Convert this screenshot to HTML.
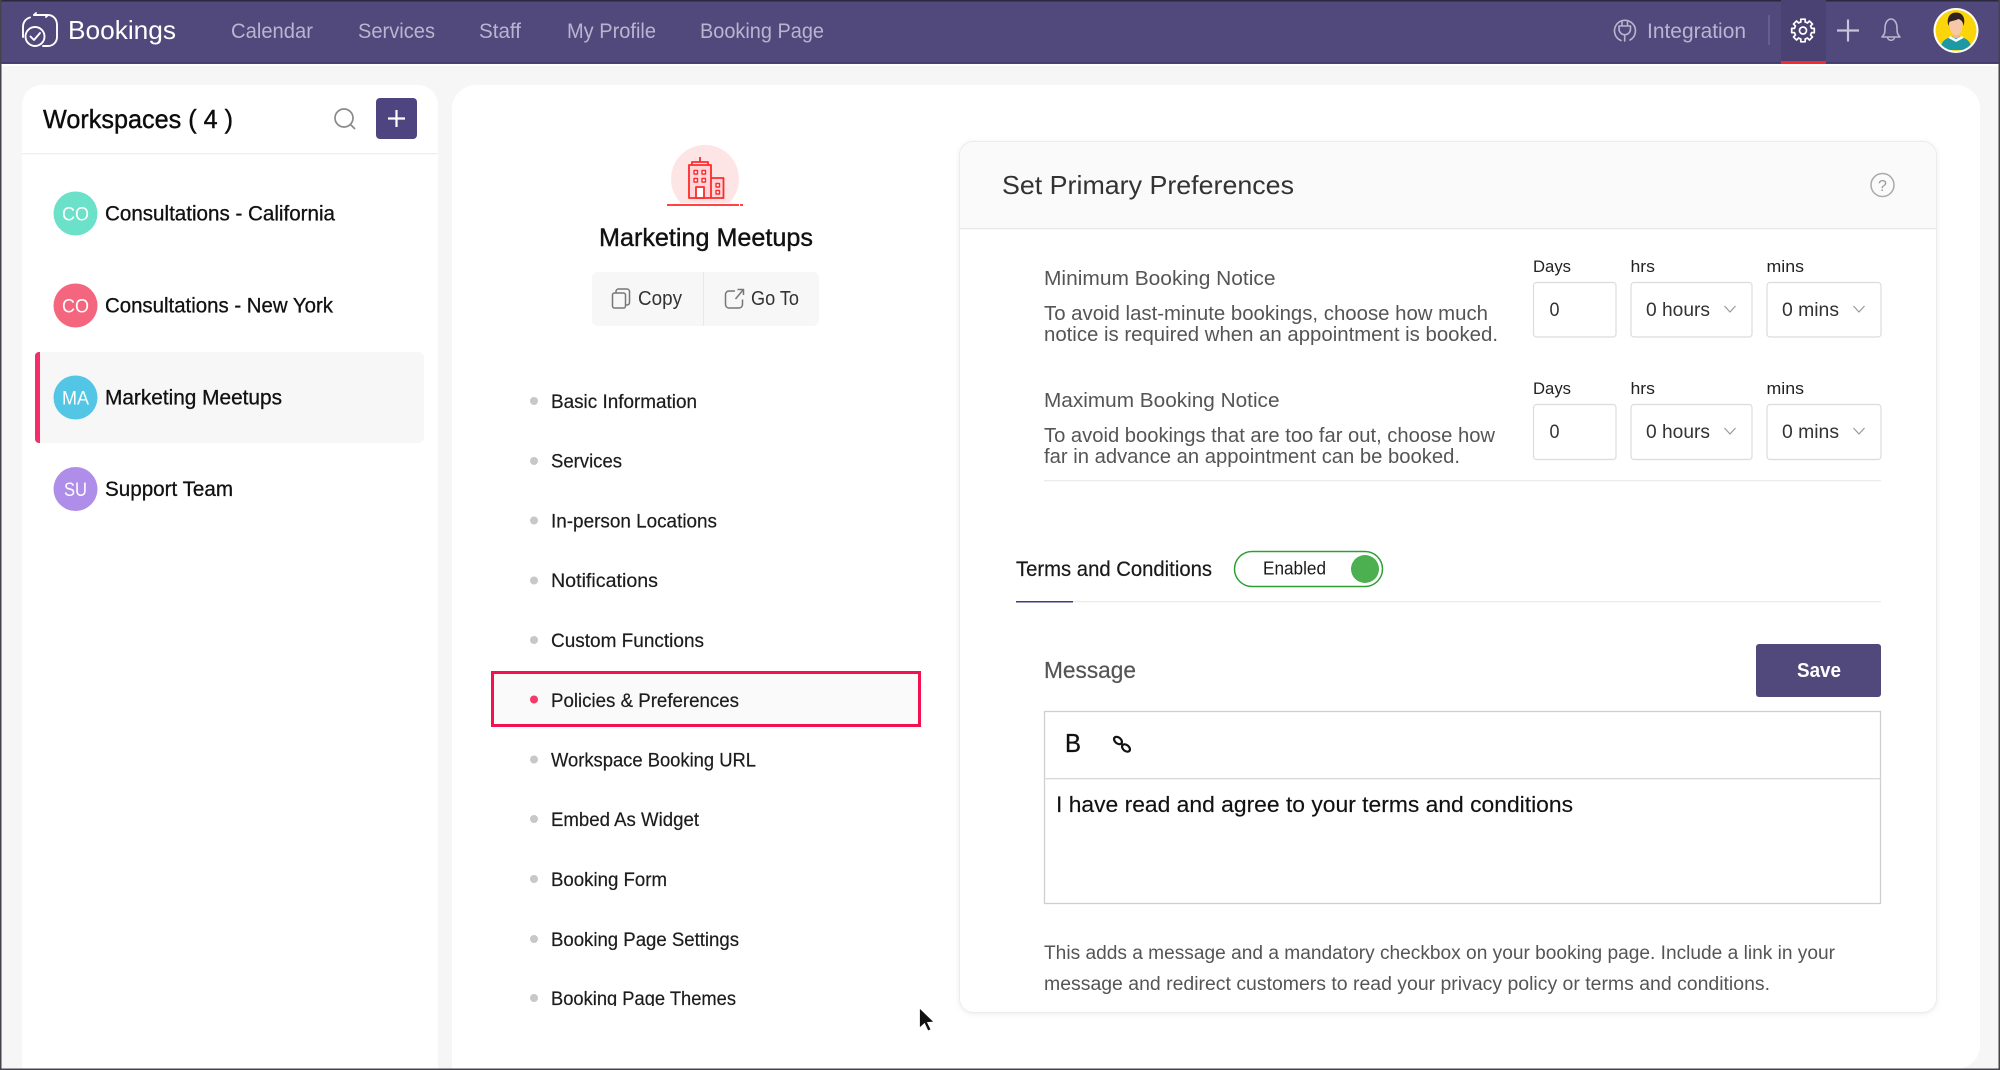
<!DOCTYPE html>
<html><head><meta charset="utf-8"><title>Bookings</title>
<style>
html,body{margin:0;padding:0;background:#f6f6f6;width:2000px;height:1070px;overflow:hidden}
svg{display:block}
text{font-family:"Liberation Sans",sans-serif}
.n{font-size:21px;fill:#b9b5d0}
.w{font-size:21px;fill:#111;stroke:#111;stroke-width:.3px}
.a{font-size:19px;fill:#fff;text-anchor:middle}
.m{font-size:19px;fill:#1c1c1c;stroke:#1c1c1c;stroke-width:.2px}
.g{font-size:20px;fill:#555}
.s{font-size:17px;fill:#222}
.v{font-size:19px;fill:#333}
.box{fill:#fff;stroke:#dcdcdc;stroke-width:1.2}
</style></head><body>
<svg width="2000" height="1070" viewBox="0 0 2000 1070" xmlns="http://www.w3.org/2000/svg">
<defs><clipPath id="av"><circle cx="1956" cy="30.500" r="20.500"/></clipPath></defs>
<rect width="2000" height="1070" fill="#f6f6f6"/>
<!-- header -->
<rect width="2000" height="64" fill="#51487b"/>
<rect width="2000" height="1.500" fill="#2b2a3d"/>
<rect y="62" width="2000" height="1.500" fill="#453c6e"/>
<rect y="64" width="2000" height="2" fill="#fff"/>
<g fill="none" stroke="#fff" stroke-width="1.900" stroke-linecap="round" stroke-linejoin="round">
<circle cx="35" cy="36.500" r="9.500"/>
<path d="M30.500 36.500l3.500 3.500 6-7"/>
<path d="M30 17.500c-4 1-7 4.500-7 9.500v10"/>
<path d="M34 15h14c5 0 9 4 9 10v12c0 5-4 9-9 9h-5"/>
<path d="M34 15l2-2M48 15l-2 2"/>
</g>
<text x="68" y="39" font-size="26" fill="#fff" textLength="108" lengthAdjust="spacingAndGlyphs">Bookings</text>
<text class="n" x="231" y="38" textLength="82" lengthAdjust="spacingAndGlyphs">Calendar</text>
<text class="n" x="358" y="38" textLength="77" lengthAdjust="spacingAndGlyphs">Services</text>
<text class="n" x="479" y="38" textLength="42" lengthAdjust="spacingAndGlyphs">Staff</text>
<text class="n" x="567" y="38" textLength="89" lengthAdjust="spacingAndGlyphs">My Profile</text>
<text class="n" x="700" y="38" textLength="124" lengthAdjust="spacingAndGlyphs">Booking Page</text>
<g fill="none" stroke="#b9b5d0" stroke-width="1.600" stroke-linecap="round" stroke-linejoin="round">
<path d="M1630 40a10.500 10.500 0 1 0-9 .500"/>
<path d="M1619 26h11.500v3a5.700 5.700 0 0 1-11.500 0zM1622 26v-4M1627.500 26v-4M1624.700 35v6"/>
</g>
<text class="n" x="1647" y="38" textLength="99" lengthAdjust="spacingAndGlyphs">Integration</text>
<rect x="1768.500" y="15" width="1" height="30" fill="#7c75a0"/>
<rect x="1781" width="45" height="61" fill="#4b4274"/>
<rect x="1781" y="61" width="45" height="3" fill="#f52a2a"/>
<g fill="none" stroke="#fff" stroke-width="1.700" stroke-linejoin="round" transform="translate(1803 30.500)">
<polygon points="8.540,-2.130 11.290,-2.190 11.290,2.190 8.540,2.130 7.540,4.530 9.530,6.430 6.430,9.530 4.530,7.540 2.130,8.540 2.190,11.290 -2.190,11.290 -2.130,8.540 -4.530,7.540 -6.430,9.530 -9.530,6.430 -7.540,4.530 -8.540,2.130 -11.290,2.190 -11.290,-2.190 -8.540,-2.130 -7.540,-4.530 -9.530,-6.430 -6.430,-9.530 -4.530,-7.540 -2.130,-8.540 -2.190,-11.290 2.190,-11.290 2.130,-8.540 4.530,-7.540 6.430,-9.530 9.530,-6.430 7.540,-4.530"/>
<circle cx="0" cy="0" r="3.500"/>
</g>
<path d="M1837 30.500h22M1848 19.500v22" stroke="#c8c5db" stroke-width="2.200"/>
<g fill="none" stroke="#b9b5d0" stroke-width="1.600" stroke-linejoin="round">
<path d="M1882 37c3-3 3-5 3-9 0-5 2.500-9 6-9s6 4 6 9c0 4 0 6 3 9z"/>
<path d="M1887.500 37.500a3.600 3.600 0 0 0 7 0"/>
</g>
<circle cx="1956" cy="30.500" r="22.500" fill="#fff"/>
<circle cx="1956" cy="30.500" r="20.500" fill="#fbd40a"/>
<g clip-path="url(#av)">
<path d="M1941 49c0-9 5-11 15-13 10 2 15 4 15 13v1h-30z" fill="#1d99a5"/>
<path d="M1950 36l6 3 6-3 1.500 2-7.500 4-7.500-4z" fill="#fff"/>
<rect x="1953" y="30" width="6" height="8" fill="#eeb48f"/>
<path d="M1949.500 24c0 7 3 11.500 6.500 11.500s6.500-4.500 6.500-11.500-2-7-6.500-7-6.500 0-6.500 7z" fill="#f6c8a8"/>
<path d="M1948.500 26c-2.500-8 1.500-13.500 7.500-13.500 6.500 0 10 5.500 7.500 13.500-.5-4-2-6-5-7-3 1.500-8 2-9 3-.5 1-.8 2.500-1 4z" fill="#2f2220"/>
</g>
<!-- sidebar -->
<path d="M22 1070V105a20 20 0 0 1 20-20h376a20 20 0 0 1 20 20v965z" fill="#fff"/>
<text x="43" y="128" font-size="26" fill="#0c0c0c" stroke="#0c0c0c" stroke-width=".4" textLength="190" lengthAdjust="spacingAndGlyphs">Workspaces ( 4 )</text>
<g fill="none" stroke="#8a8a8a" stroke-width="1.700" stroke-linecap="round"><circle cx="344" cy="118" r="9"/><path d="M351 125l3.500 3.500"/></g>
<rect x="376" y="98" width="41" height="41" rx="4" fill="#4d4480"/>
<path d="M388 118.500h17M396.500 110v17" stroke="#fff" stroke-width="2.200"/>
<rect x="22" y="153" width="416" height="1.300" fill="#efefef"/>
<rect x="35" y="352" width="389" height="91" rx="6" fill="#f7f7f7"/>
<path d="M40 352h-1a4 4 0 0 0-4 4v83a4 4 0 0 0 4 4h1z" fill="#f52d6a"/>
<circle cx="75.500" cy="213.500" r="22" fill="#6ae1c8"/><text class="a" x="75.500" y="220.500" textLength="27" lengthAdjust="spacingAndGlyphs">CO</text>
<text class="w" x="105" y="220.700" textLength="230" lengthAdjust="spacingAndGlyphs">Consultations - California</text>
<circle cx="75.500" cy="305.500" r="22" fill="#f4667d"/><text class="a" x="75.500" y="312.500" textLength="27" lengthAdjust="spacingAndGlyphs">CO</text>
<text class="w" x="105" y="312.700" textLength="228" lengthAdjust="spacingAndGlyphs">Consultations - New York</text>
<circle cx="75.500" cy="397.500" r="22" fill="#52c6e4"/><text class="a" x="75.500" y="404.500" textLength="27" lengthAdjust="spacingAndGlyphs">MA</text>
<text class="w" x="105" y="404.700" textLength="177" lengthAdjust="spacingAndGlyphs">Marketing Meetups</text>
<circle cx="75.500" cy="489" r="22" fill="#ae8ee8"/><text class="a" x="75.500" y="496" textLength="23" lengthAdjust="spacingAndGlyphs">SU</text>
<text class="w" x="105" y="496" textLength="128" lengthAdjust="spacingAndGlyphs">Support Team</text>
<!-- main panel -->
<path d="M452 1069V109a24 24 0 0 1 24-24h1480a24 24 0 0 1 24 24v936a24 24 0 0 1-24 24z" fill="#fff"/>
<!-- workspace icon -->
<path d="M681 203a34 34 0 1 1 48 0z" fill="#fde5e6"/>
<path d="M667 205h72M740 205h3" stroke="#ff2a2a" stroke-width="1.800"/>
<g stroke="#ff2a2a" stroke-width="1.800" stroke-linejoin="round">
<path d="M689 198v-33h22v33zM711 178h12.500v20h-12.500z" fill="#ffd6d9"/>
<path d="M692 165v-3h16v3M700 162v-5" fill="none"/>
<path d="M696 198v-11h8v11z" fill="#fff"/>
<g fill="#fff" stroke-width="1.400">
<rect x="694" y="170.500" width="3.500" height="3.500"/><rect x="702" y="170.500" width="3.500" height="3.500"/>
<rect x="694" y="178.500" width="3.500" height="3.500"/><rect x="702" y="178.500" width="3.500" height="3.500"/>
<rect x="716" y="183.500" width="3.500" height="3.500"/><rect x="716" y="190.500" width="3.500" height="3.500"/>
</g></g>
<text x="599" y="246" font-size="25" fill="#111" stroke="#111" stroke-width=".4" textLength="214" lengthAdjust="spacingAndGlyphs">Marketing Meetups</text>
<rect x="592" y="272" width="227" height="54" rx="6" fill="#f7f7f7"/>
<rect x="703" y="272" width="1" height="54" fill="#e9e9e9"/>
<g fill="none" stroke="#777" stroke-width="1.500" stroke-linejoin="round">
<rect x="612.500" y="293" width="13" height="15" rx="2"/>
<path d="M616 293v-1.500a2.500 2.500 0 0 1 2.500-2.500h8.500a2.500 2.500 0 0 1 2.500 2.500v11a2.500 2.500 0 0 1-4 2"/>
<path d="M735 291h-6a3.500 3.500 0 0 0-3.500 3.500v10a3.500 3.500 0 0 0 3.500 3.500h10a3.500 3.500 0 0 0 3.500-3.500v-5M735.500 299l7.500-9M737.500 289.500h6v5.500"/>
</g>
<text x="638" y="305" font-size="20" fill="#333" textLength="44" lengthAdjust="spacingAndGlyphs">Copy</text>
<text x="751" y="305" font-size="20" fill="#333" textLength="48" lengthAdjust="spacingAndGlyphs">Go To</text>
<!-- nav -->
<rect x="492.500" y="672.500" width="427" height="53" fill="#fafafa" stroke="#f5104f" stroke-width="3"/>
<g fill="#c8c8c8">
<circle cx="534" cy="401" r="4"/><circle cx="534" cy="461" r="4"/><circle cx="534" cy="520.500" r="4"/><circle cx="534" cy="580.500" r="4"/><circle cx="534" cy="640" r="4"/>
<circle cx="534" cy="759.500" r="4"/><circle cx="534" cy="819" r="4"/><circle cx="534" cy="879" r="4"/><circle cx="534" cy="939" r="4"/><circle cx="534" cy="998" r="4"/>
</g>
<circle cx="534" cy="699.500" r="4" fill="#f5396b"/>
<text class="m" x="551" y="408" textLength="146" lengthAdjust="spacingAndGlyphs">Basic Information</text>
<text class="m" x="551" y="467.500" textLength="71" lengthAdjust="spacingAndGlyphs">Services</text>
<text class="m" x="551" y="527.500" textLength="166" lengthAdjust="spacingAndGlyphs">In-person Locations</text>
<text class="m" x="551" y="587" textLength="107" lengthAdjust="spacingAndGlyphs">Notifications</text>
<text class="m" x="551" y="647" textLength="153" lengthAdjust="spacingAndGlyphs">Custom Functions</text>
<text class="m" x="551" y="707" textLength="188" lengthAdjust="spacingAndGlyphs">Policies &amp; Preferences</text>
<text class="m" x="551" y="766.500" textLength="205" lengthAdjust="spacingAndGlyphs">Workspace Booking URL</text>
<text class="m" x="551" y="826" textLength="148" lengthAdjust="spacingAndGlyphs">Embed As Widget</text>
<text class="m" x="551" y="886" textLength="116" lengthAdjust="spacingAndGlyphs">Booking Form</text>
<text class="m" x="551" y="946" textLength="188" lengthAdjust="spacingAndGlyphs">Booking Page Settings</text>
<text class="m" x="551" y="1005" textLength="185" lengthAdjust="spacingAndGlyphs">Booking Page Themes</text>
<rect x="540" y="1006" width="260" height="12" fill="#fff"/>
<path d="M919.500 1008v20l5-4.500 3.500 7.500 3-1.500-3.500-7 6.500-.5z" fill="#111" stroke="#fff" stroke-width=".8"/>
<!-- card -->
<rect x="959.500" y="141.500" width="977" height="871" rx="14" fill="#fff" stroke="#ececec" style="filter:drop-shadow(0 1px 3px rgba(0,0,0,.07))"/>
<path d="M960 228V156a14 14 0 0 1 14-14h948a14 14 0 0 1 14 14v72z" fill="#fafafa"/>
<rect x="960" y="228" width="976" height="1.300" fill="#e9e9e9"/>
<text x="1002" y="194" font-size="26" fill="#333" textLength="292" lengthAdjust="spacingAndGlyphs">Set Primary Preferences</text>
<circle cx="1882.500" cy="185" r="11.500" fill="none" stroke="#aaa" stroke-width="1.500"/>
<text x="1882.500" y="191" font-size="16" fill="#999" text-anchor="middle">?</text>
<!-- row 1 -->
<text x="1044" y="285" font-size="20" fill="#555" textLength="231.500" lengthAdjust="spacingAndGlyphs">Minimum Booking Notice</text>
<text class="g" x="1044" y="320" textLength="444" lengthAdjust="spacingAndGlyphs">To avoid last-minute bookings, choose how much</text>
<text class="g" x="1044" y="341" textLength="454" lengthAdjust="spacingAndGlyphs">notice is required when an appointment is booked.</text>
<text class="s" x="1533" y="272" textLength="38" lengthAdjust="spacingAndGlyphs">Days</text>
<text class="s" x="1630.500" y="272" textLength="24.500" lengthAdjust="spacingAndGlyphs">hrs</text>
<text class="s" x="1766.500" y="272" textLength="37.500" lengthAdjust="spacingAndGlyphs">mins</text>
<rect class="box" x="1533.500" y="282.500" width="82.500" height="54.500" rx="3"/>
<rect class="box" x="1631" y="282.500" width="121" height="54.500" rx="3"/>
<rect class="box" x="1767" y="282.500" width="114" height="54.500" rx="3"/>
<text class="v" x="1549.500" y="316" textLength="10" lengthAdjust="spacingAndGlyphs">0</text>
<text class="v" x="1646" y="316" textLength="64" lengthAdjust="spacingAndGlyphs">0 hours</text>
<text class="v" x="1782" y="316" textLength="57" lengthAdjust="spacingAndGlyphs">0 mins</text>
<path d="M1724.500 306l5.500 6 5.500-6M1853.500 306l5.500 6 5.500-6" fill="none" stroke="#999" stroke-width="1.200"/>
<!-- row 2 -->
<text x="1044" y="407" font-size="20" fill="#555" textLength="235.500" lengthAdjust="spacingAndGlyphs">Maximum Booking Notice</text>
<text class="g" x="1044" y="442" textLength="451" lengthAdjust="spacingAndGlyphs">To avoid bookings that are too far out, choose how</text>
<text class="g" x="1044" y="463" textLength="416" lengthAdjust="spacingAndGlyphs">far in advance an appointment can be booked.</text>
<text class="s" x="1533" y="394" textLength="38" lengthAdjust="spacingAndGlyphs">Days</text>
<text class="s" x="1630.500" y="394" textLength="24.500" lengthAdjust="spacingAndGlyphs">hrs</text>
<text class="s" x="1766.500" y="394" textLength="37.500" lengthAdjust="spacingAndGlyphs">mins</text>
<rect class="box" x="1533.500" y="404.500" width="82.500" height="55" rx="3"/>
<rect class="box" x="1631" y="404.500" width="121" height="55" rx="3"/>
<rect class="box" x="1767" y="404.500" width="114" height="55" rx="3"/>
<text class="v" x="1549.500" y="438" textLength="10" lengthAdjust="spacingAndGlyphs">0</text>
<text class="v" x="1646" y="438" textLength="64" lengthAdjust="spacingAndGlyphs">0 hours</text>
<text class="v" x="1782" y="438" textLength="57" lengthAdjust="spacingAndGlyphs">0 mins</text>
<path d="M1724.500 428l5.500 6 5.500-6M1853.500 428l5.500 6 5.500-6" fill="none" stroke="#999" stroke-width="1.200"/>
<rect x="1044" y="480" width="837" height="1.300" fill="#ececec"/>
<!-- terms -->
<text x="1016" y="576" font-size="21" fill="#1a1a1a" stroke="#1a1a1a" stroke-width=".2" textLength="196" lengthAdjust="spacingAndGlyphs">Terms and Conditions</text>
<rect x="1234.500" y="551.500" width="148" height="35" rx="17.500" fill="#fff" stroke="#2f9f35" stroke-width="1.500"/>
<text x="1263" y="574.500" font-size="18" fill="#1a1a1a" textLength="63" lengthAdjust="spacingAndGlyphs">Enabled</text>
<circle cx="1365" cy="569" r="14" fill="#4caf50"/>
<rect x="1016" y="601" width="865" height="1.300" fill="#ececec"/>
<rect x="1016" y="601" width="57" height="1.500" fill="#443a80"/>
<text x="1044" y="678" font-size="23" fill="#555" stroke="#555" stroke-width=".2" textLength="92" lengthAdjust="spacingAndGlyphs">Message</text>
<rect x="1756" y="644" width="125" height="53" rx="3" fill="#51487b"/>
<text x="1797" y="677" font-size="20" font-weight="bold" fill="#fff" textLength="44" lengthAdjust="spacingAndGlyphs">Save</text>
<rect x="1044.500" y="711.500" width="836" height="192" fill="#fff" stroke="#cfcfcf" stroke-width="1.300"/>
<rect x="1044" y="778" width="837" height="1.300" fill="#d8d8d8"/>
<text x="1065" y="752" font-size="26" fill="#111" stroke="#111" stroke-width=".3" textLength="16" lengthAdjust="spacingAndGlyphs">B</text>
<g fill="none" stroke="#111" stroke-width="2.200"><ellipse cx="1118" cy="740.500" rx="4.500" ry="3" transform="rotate(40 1118 740.500)"/><ellipse cx="1126" cy="748" rx="4.500" ry="3" transform="rotate(40 1126 748)"/></g>
<text x="1056" y="812" font-size="22" fill="#111" stroke="#111" stroke-width=".15" textLength="517" lengthAdjust="spacingAndGlyphs">I have read and agree to your terms and conditions</text>
<text x="1044" y="959" font-size="19" fill="#555" textLength="791" lengthAdjust="spacingAndGlyphs">This adds a message and a mandatory checkbox on your booking page. Include a link in your</text>
<text x="1044" y="990" font-size="19" fill="#555" textLength="726" lengthAdjust="spacingAndGlyphs">message and redirect customers to read your privacy policy or terms and conditions.</text>
<!-- window edges -->
<rect x="0" y="0" width="1.500" height="1070" fill="#44444c"/>
<rect x="1998.500" y="0" width="1.500" height="1070" fill="#44444c"/>
<rect x="0" y="1068.500" width="2000" height="1.500" fill="#44444c"/>
</svg>
</body></html>
